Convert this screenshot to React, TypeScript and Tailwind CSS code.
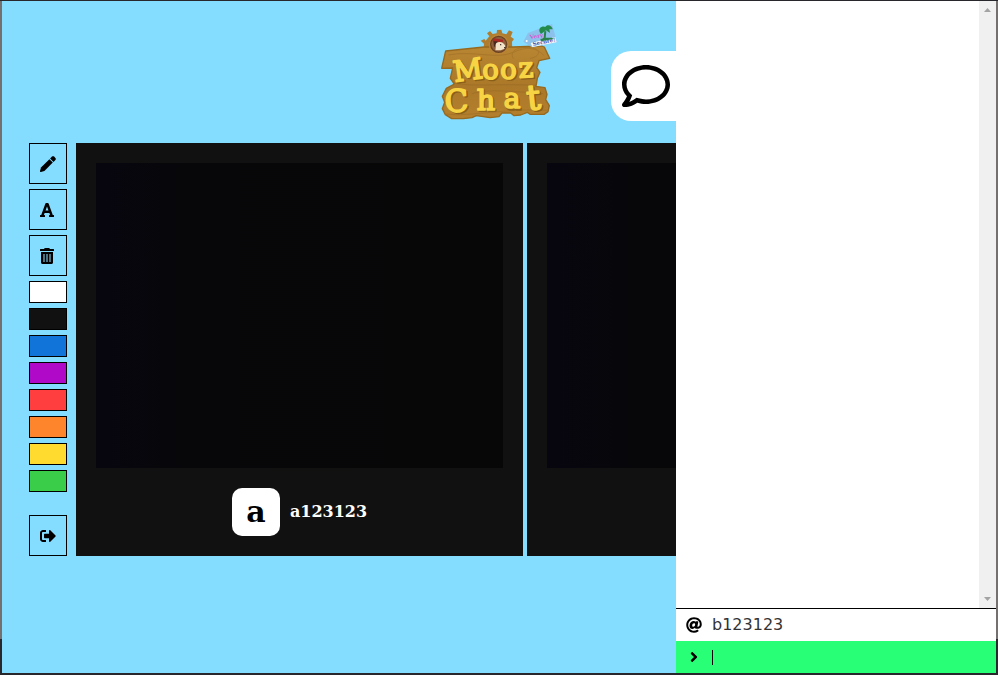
import { FaAngleRight, FaAt, FaFont, FaRegComment, FaSignOutAlt } from "react-icons/fa";

const swatches = [
  { name: "White", fill: "bg-white" },
  { name: "Black", fill: "bg-[#111111]" },
  { name: "Blue", fill: "bg-[#1174d8]" },
  { name: "Purple", fill: "bg-[#b009c8]" },
  { name: "Red", fill: "bg-[#ff3f3f]" },
  { name: "Orange", fill: "bg-[#ff852d]" },
  { name: "Yellow", fill: "bg-[#ffdb2f]" },
  { name: "Green", fill: "bg-[#39cd49]" },
];

const toolClass = "flex h-[41px] w-full items-center justify-center border border-black";

const letters = [
  { c: "M", x: 74, y: 201, size: 86, turn: -8 },
  { c: "o", x: 158, y: 193, size: 82, turn: -3 },
  { c: "o", x: 211, y: 191, size: 82, turn: 0 },
  { c: "z", x: 267, y: 188, size: 84, turn: -3 },
  { c: "C", x: 46, y: 292, size: 92, turn: -3 },
  { c: "h", x: 140, y: 285, size: 86, turn: 0 },
  { c: "a", x: 221, y: 280, size: 84, turn: 0 },
  { c: "t", x: 293, y: 286, size: 104, turn: -6 },
];

function Letters({ fill, shift }: { fill: string; shift: number }) {
  return (
    <g
      fill={fill}
      stroke={fill}
      strokeWidth="5"
      strokeLinejoin="round"
      fontFamily="'DejaVu Serif', serif"
      aria-hidden={shift > 0}
    >
      {letters.map((l, i) => (
        <text
          key={i}
          x={l.x + shift}
          y={l.y + shift}
          fontSize={l.size}
          transform={`rotate(${l.turn} ${l.x} ${l.y})`}
        >
          {l.c}
        </text>
      ))}
    </g>
  );
}

function Logo() {
  return (
    <svg viewBox="33 24 348 294" className="h-[98px] w-[116px]" role="img" aria-label="Mooz Chat">
      <defs>
        <linearGradient id="wood" x1="0" y1="0" x2="0" y2="1">
          <stop offset="0" stopColor="#b98632" />
          <stop offset="0.55" stopColor="#ab7829" />
          <stop offset="1" stopColor="#b4802d" />
        </linearGradient>
      </defs>
      {/* gear crest behind the board */}
      <path
        d="M160 115 L162 86 L152 77 L163 72 L167 77 L178 64 L171 55 L180 48 L188 57 L200 55 L201 45 L214 44 L217 55 L229 58 L237 46 L248 51 L242 65 L252 72 L246 80 L247 112 Z"
        fill="#b07d2f"
      />
      {/* wooden board */}
      <path
        d="M47 108 L162 96 L249 96 L335 93 L343 96 L359 130 L327 137 L320 158 L330 172 L322 190 L318 214 L345 218 L351 238 L347 254 L358 272 L354 290 L342 298 L300 298 L292 292 L272 300 L252 302 L242 294 L216 294 L207 305 L180 308 L139 302 L126 308 L100 311 L65 311 L46 299 L37 281 L44 262 L37 244 L49 220 L73 207 L61 190 L68 159 L35 160 Z"
        fill="url(#wood)"
        stroke="#96691f"
        strokeWidth="4"
        strokeLinejoin="round"
      />
      <g fill="none" stroke="#8f6120" strokeWidth="3" opacity="0.35">
        <path d="M55 120 C130 105 200 135 250 112 S325 104 342 122" />
        <path d="M250 130 C235 105 270 94 304 98 C340 104 325 128 300 130" />
        <path d="M70 204 C130 216 200 205 318 211" />
        <path d="M125 236 C180 220 250 230 340 236" />
        <path d="M48 297 C120 306 230 279 350 286" />
      </g>
      {/* portrait medallion */}
      <circle cx="206" cy="88" r="28" fill="#6b4222" stroke="#b98436" strokeWidth="4" />
      <circle cx="206" cy="88" r="22" fill="#8f5f3c" />
      <path d="M188 79 L190 70 L202 71 L219 74 L219 80 L208 82 L199 84 Z" fill="#a82a22" />
      <path d="M190 79 L202 79 L203 88 L199 99 L192 94 Z" fill="#4a2a1c" />
      <path
        d="M199 84 C208 78 221 81 226 93 L224 101 L212 106 L196 106 C199 99 194 91 199 84 Z"
        fill="#f3e3c8"
      />
      <circle cx="212" cy="89" r="2" fill="#2a1712" />
      <circle cx="224" cy="98" r="2" fill="#2a1712" />
      <Letters fill="#8a5f17" shift={4} />
      <Letters fill="#f7d443" shift={0} />
      {/* luggage tag */}
      <path d="M294 54 L366 27 L381 82 L306 97 L280 80 Z" fill="#8cc1ec" />
      <path d="M302 84 L376 66 L380 82 L307 96 Z" fill="#f4f7fb" />
      <circle cx="290" cy="78" r="3" fill="#ffffff" />
      <path d="M343 48 L349 49 L347 68 L366 68 L371 72 L334 79 L330 74 L341 68 Z" fill="#27814a" />
      <path
        d="M329 51 C324 38 338 31 346 36 C351 25 367 32 368 43 L358 43 L360 54 L348 46 L333 57 Z"
        fill="#238b4b"
      />
      <g fontFamily="'DejaVu Serif', serif" fontWeight="700">
        <text x="300" y="72" fontSize="17" fill="#d65fd0" transform="rotate(-8 300 72)">
          Very
        </text>
        <text x="310" y="93" fontSize="16" fill="#4b4a9c" transform="rotate(-12 310 93)">
          Secure!
        </text>
      </g>
    </svg>
  );
}

function PencilIcon() {
  return (
    <svg viewBox="0 0 16 16" className="size-4" aria-hidden="true">
      <path d="M9.400 3.200 12.800 6.600 4.400 15 .9 16C.3 16.100-.1 15.700 0 15.100L1 11.600Z" />
      <path d="M10.100 2.500 12 .6C12.600 0 13.500 0 14.100.6L15.400 1.900C16 2.500 16 3.400 15.400 4L13.500 5.900Z" />
    </svg>
  );
}

function TrashIcon() {
  return (
    <svg viewBox="0 0 16 16" className="size-4" aria-hidden="true">
      <path
        d="M.5 1H4l.6-.7C4.700.1 4.900 0 5.100 0h3.800c.2 0 .4.1.5.3L10 1h3.500c.3 0 .5.2.5.5V3H0V1.500C0 1.200.2 1 .5 1Z"
        fill="black"
      />
      <path d="M1 4h12v10.500c0 .8-.7 1.500-1.500 1.500h-9C1.700 16 1 15.300 1 14.500Z" fill="black" />
      <path d="M3 6h2v8H3ZM6 6h2v8H6ZM9 6h2v8H9Z" fill="#477383" />
    </svg>
  );
}

function Tools() {
  return (
    <aside className="flex w-[38px] shrink-0 flex-col gap-[5px]" aria-label="Drawing tools">
      <button className={toolClass} aria-label="Draw">
        <PencilIcon />
      </button>
      <button className={toolClass} aria-label="Text">
        <span className="flex w-4">
          <FaFont className="h-4 w-3.5" />
        </span>
      </button>
      <button className={toolClass} aria-label="Clear">
        <TrashIcon />
      </button>
      {swatches.map((s) => (
        <button
          key={s.name}
          aria-label={s.name}
          className={`h-[22px] w-full border border-black ${s.fill}`}
        />
      ))}
      <button className={`${toolClass} mt-auto`} aria-label="Leave">
        <FaSignOutAlt size={16} />
      </button>
    </aside>
  );
}

function VideoCard({ name }: { name: string }) {
  return (
    <article className="flex min-w-0 flex-1 flex-col gap-5 bg-[#111111] p-5">
      <div className="aspect-[4/3] w-full bg-linear-to-r from-[#07060f] via-[#070709] via-25% to-[#070708]" />
      <div className="flex items-center justify-center gap-2.5 font-['DejaVu_Serif',serif] font-bold">
        <span className="flex size-12 items-center justify-center rounded-[10px] bg-white text-[30px] leading-none text-black">
          {name[0]}
        </span>
        <span className="text-base text-white">{name}</span>
      </div>
    </article>
  );
}

function ScrollTrack() {
  return (
    <div className="flex w-[17px] flex-col items-center justify-between bg-[#f0f0f0] py-[7px]">
      <svg viewBox="0 0 7 4" className="h-1 w-[7px]" aria-hidden="true">
        <path d="M0 4L3.500 0L7 4Z" fill="#a3a3a3" />
      </svg>
      <svg viewBox="0 0 7 4" className="h-1 w-[7px]" aria-hidden="true">
        <path d="M0 0L3.500 4L7 0Z" fill="#a3a3a3" />
      </svg>
    </div>
  );
}

function ChatDrawer() {
  return (
    <>
      <button
        aria-label="Toggle chat"
        className="absolute top-[50px] right-80 flex h-[70px] w-[65px] items-center justify-end rounded-l-[20px] bg-white pr-1.5"
      >
        <FaRegComment size={48} />
      </button>
      <section
        aria-label="Chat"
        className="absolute inset-y-0 right-0 flex w-80 flex-col bg-white font-['DejaVu_Sans',sans-serif] text-base"
      >
        <div className="flex flex-1 justify-end">
          <ScrollTrack />
        </div>
        <div className="flex h-[33px] items-center gap-2.5 border-t border-black px-2.5">
          <FaAt size={16} />
          <span className="text-[#333333]">b123123</span>
        </div>
        <label className="flex h-8 items-center gap-2.5 bg-[#28ff77] px-2.5">
          <span className="flex w-4 justify-center">
            <FaAngleRight size={16} />
          </span>
          <span className="flex flex-1 items-center">
            <span className="h-[15px] w-px bg-black" />
            <input aria-label="Message" className="w-full bg-transparent outline-none" />
          </span>
        </label>
      </section>
    </>
  );
}

export default function App() {
  return (
    <div className="flex h-screen flex-col border-t border-b-2 border-[#28282c] bg-linear-to-b from-[#74706f] from-95% to-[#29292d] to-95% px-0.5">
      <div className="relative flex-1 overflow-hidden bg-[#84dcff]">
        <header className="flex justify-center py-[22px]">
          <Logo />
        </header>
        <main className="flex gap-[9px] pr-[22px] pl-[27px]">
          <Tools />
          <div className="flex flex-1 gap-1">
            <VideoCard name="a123123" />
            <VideoCard name="b123123" />
          </div>
        </main>
        <ChatDrawer />
      </div>
    </div>
  );
}
